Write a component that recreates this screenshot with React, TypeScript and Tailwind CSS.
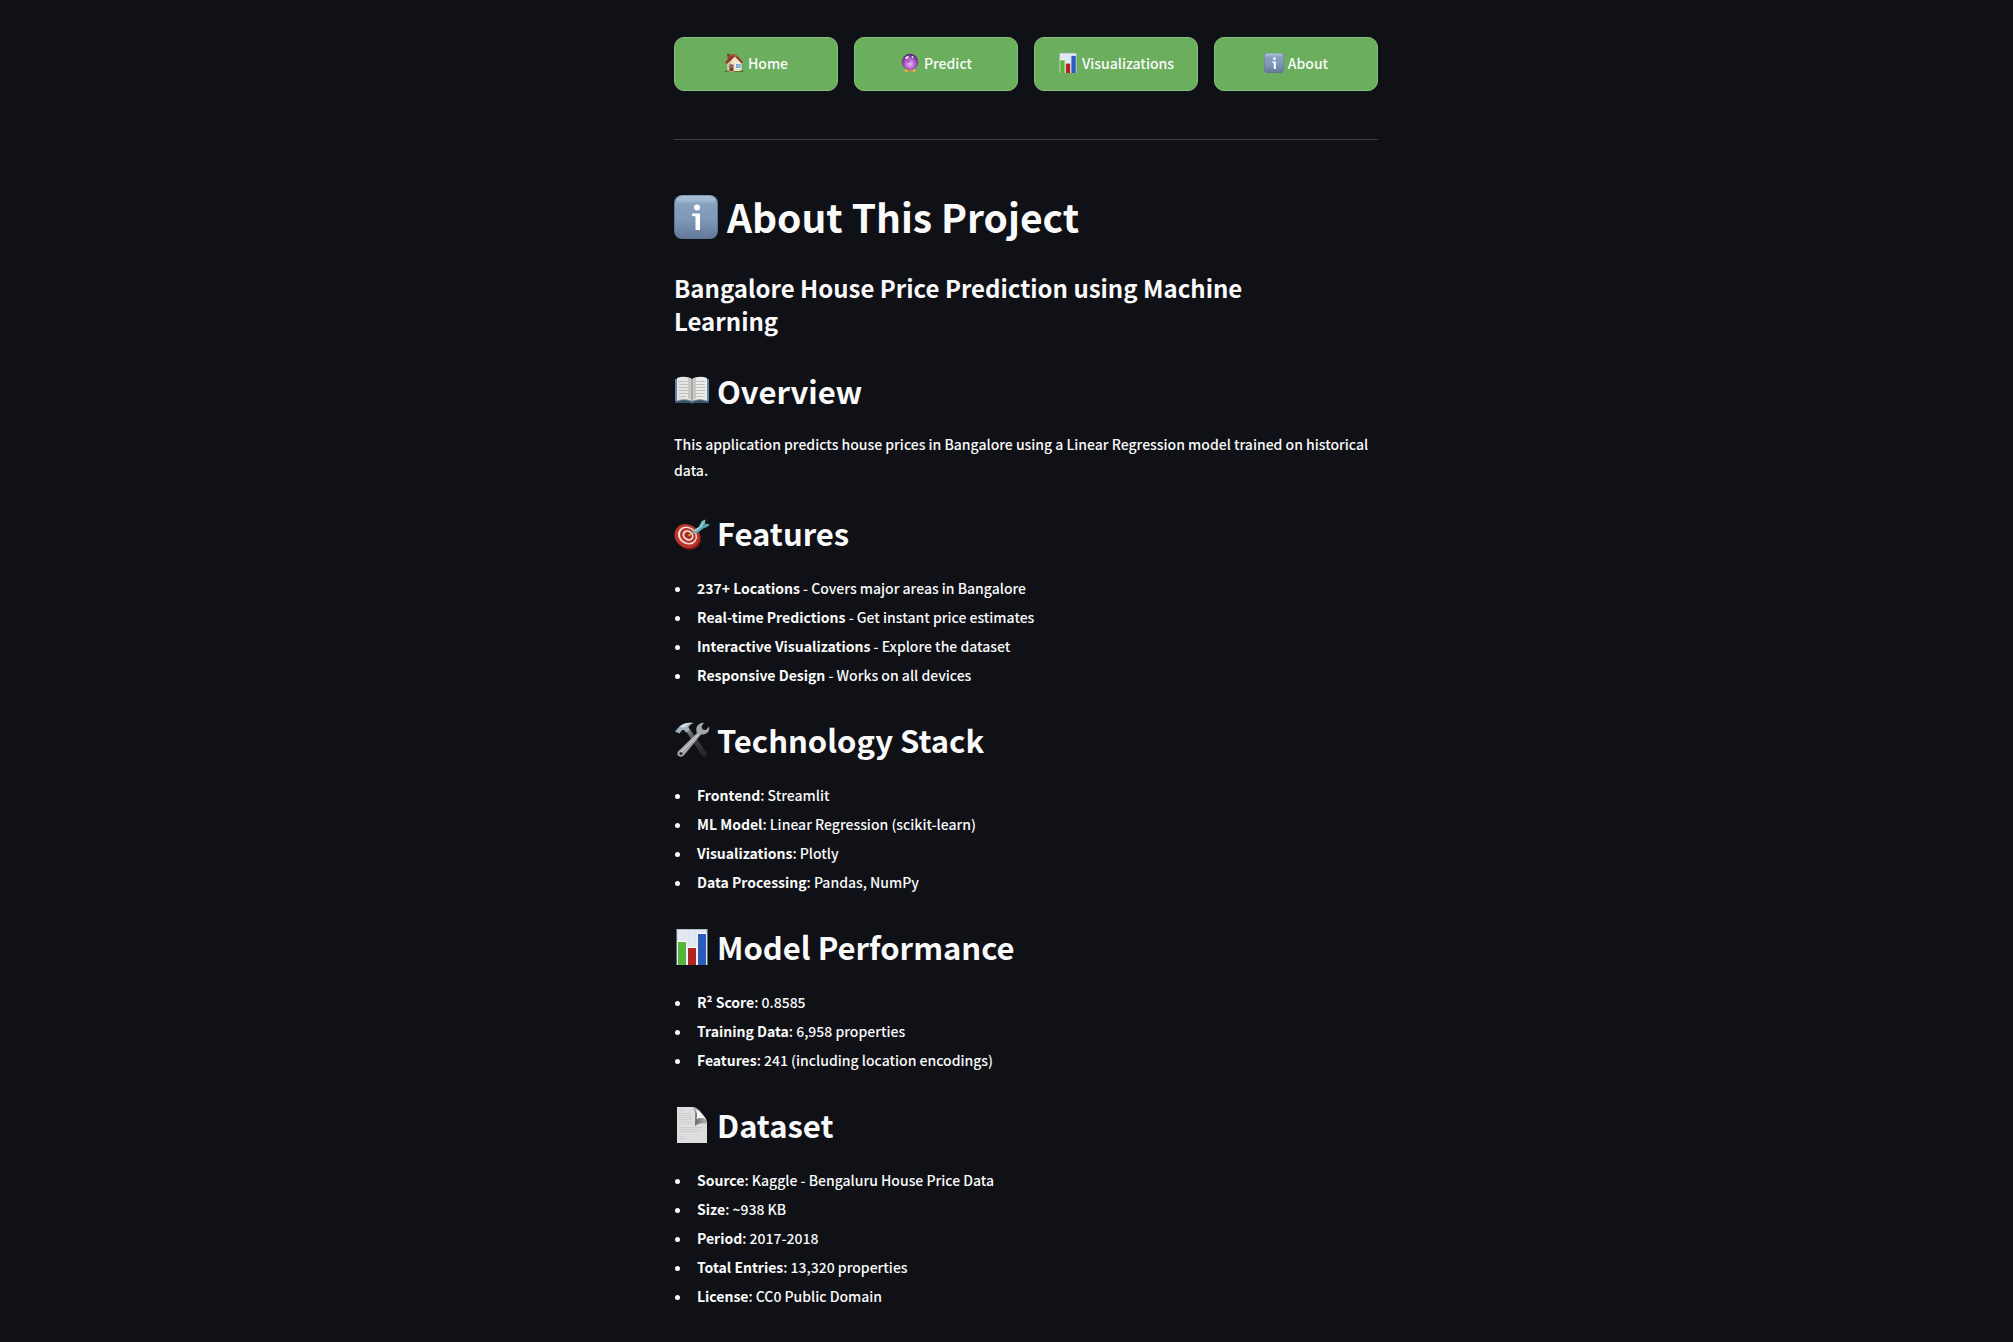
import type { ReactNode } from "react";

function HouseIcon({ className }: { className: string }) {
  return (
    <svg viewBox="0 0 40 40" className={className} aria-hidden="true">
      <rect x="7" y="3" width="5" height="10" fill="#9a4a38" />
      <rect x="6" y="2" width="7" height="3" fill="#7d3427" />
      <path d="M7 18 20 6l15 13v19H7Z" fill="#f3e3c3" />
      <path d="M7 18 15 11v27H7Z" fill="#d9c39c" />
      <path d="M2 19 16 3l8 0L38 18l-3 3L22 7 6 22Z" fill="#8e3a2c" />
      <path d="M16 3h8l5 5-7-1Z" fill="#b9604c" />
      <rect x="11" y="23" width="8" height="14" fill="#7a3c2c" />
      <rect x="13" y="25" width="4" height="4" fill="#6fa3c9" />
      <rect x="23" y="21" width="11" height="10" fill="#fff" />
      <rect x="24" y="22" width="9" height="8" fill="#5f9fd0" />
      <path d="M28.500 22v8M24 26h9" stroke="#d8ecf8" strokeWidth="1" />
      <path d="M1 36q5-3 9 0h20q5-3 9 0v2H1Z" fill="#5c7a35" />
      <rect x="10" y="36" width="10" height="2" fill="#b39a80" />
    </svg>
  );
}

function CrystalBallIcon({ className }: { className: string }) {
  return (
    <svg viewBox="0 0 40 40" className={className} aria-hidden="true">
      <defs>
        <radialGradient id="ball" cx="50%" cy="62%" r="55%">
          <stop offset="0" stopColor="#f0b8f6" />
          <stop offset="0.5" stopColor="#b765cb" />
          <stop offset="1" stopColor="#5f2d83" />
        </radialGradient>
      </defs>
      <path d="M10 32h20l3 4-4 3-4-2H15l-4 2-4-3Z" fill="#c99a3e" />
      <path d="M10 34l4 3M30 34l-4 3" stroke="#f5dc8a" strokeWidth="2" />
      <circle cx="20" cy="18" r="16.500" fill="url(#ball)" />
      <ellipse cx="14" cy="9" rx="4" ry="2.500" fill="#fff" opacity="0.85" transform="rotate(-30 14 9)" />
      <circle cx="25" cy="8" r="1.800" fill="#fff" opacity="0.9" />
      <circle cx="17" cy="17" r="2" fill="#6a2f8f" opacity="0.7" />
    </svg>
  );
}

function ChartIcon({ className }: { className: string }) {
  return (
    <svg viewBox="0 0 36 36" className={className} aria-hidden="true">
      <rect x="2.500" y="0" width="31" height="36" fill="#b4c0cd" />
      <rect x="3.500" y="1" width="29" height="35" fill="#e3e9f3" />
      <path d="M4 7h28M4 13h28M4 19h28M4 25h28M4 31h28M9 1v34M15 1v34M21 1v34M27 1v34" stroke="#d6dfec" strokeWidth="0.500" />
      <rect x="3.500" y="12" width="9" height="24" fill="#fff" />
      <rect x="13.500" y="18" width="9" height="18" fill="#fff" />
      <rect x="23.500" y="4" width="9" height="32" fill="#fff" />
      <rect x="4" y="13" width="8" height="23" fill="#54b53d" />
      <rect x="14" y="19" width="8" height="17" fill="#b1251e" />
      <rect x="24" y="5" width="8" height="31" fill="#2a5cbc" />
    </svg>
  );
}

function InfoIcon({ className }: { className: string }) {
  return (
    <svg viewBox="0 0 44 44" className={className} aria-hidden="true">
      <defs>
        <linearGradient id="tile" x1="0" y1="0" x2="0" y2="1">
          <stop offset="0" stopColor="#a9bfd4" />
          <stop offset="0.100" stopColor="#a3b9d0" />
          <stop offset="0.200" stopColor="#87a0be" />
          <stop offset="0.550" stopColor="#8199b8" />
          <stop offset="1" stopColor="#63799a" />
        </linearGradient>
      </defs>
      <rect width="44" height="44" rx="8" fill="#5d7493" />
      <rect x="1" y="0.500" width="42" height="42.500" rx="7.500" fill="url(#tile)" />
      <circle cx="23" cy="12.500" r="3" fill="#fff" />
      <path d="M18 18.500h8v16.500h-4.500V21.500l-3.500-0.800Z" fill="#fff" />
    </svg>
  );
}

function BookIcon({ className }: { className: string }) {
  return (
    <svg viewBox="0 0 36 36" className={className} aria-hidden="true">
      <path d="M1 6h34v24H20q-2 2-4 0H1Z" fill="#38576e" />
      <path d="M1 6h2v22H1ZM33 6h2v22h-2Z" fill="#5e87a3" />
      <path d="M3 5q8-3 15 1v22q-8-3-15 0Z" fill="#e6e5e3" />
      <path d="M33 5q-8-3-15 1v22q8-3 15 0Z" fill="#ececea" />
      <path d="M14 4.500q3 0 4 2v21q-1-1.500-4-2ZM22 4.500q-3 0-4 2v21q1-1.500 4-2Z" fill="#c9c7c3" />
      <path d="M5 8.500h9M5 11.500h9M5 14.500h9M5 17.500h9M5 20.500h9M5 23.500h7M22 8.500h9M22 11.500h9M22 14.500h9M22 17.500h9M22 20.500h9M22 23.500h7" stroke="#bdbcb9" strokeWidth="0.900" />
      <path d="M3 28q8-3 15 0.500q7-3.500 15-0.500" fill="none" stroke="#9b9a96" strokeWidth="0.800" />
      <path d="M18 6v22" stroke="#8b8985" strokeWidth="1" />
    </svg>
  );
}

function DartIcon({ className }: { className: string }) {
  return (
    <svg viewBox="0 0 36 36" className={className} aria-hidden="true">
      <ellipse cx="14.500" cy="22.500" rx="13" ry="11.500" transform="rotate(35 14.500 22.500)" fill="#7c1d18" />
      <ellipse cx="13" cy="21" rx="13" ry="11.500" transform="rotate(35 13 21)" fill="#bb332b" />
      <ellipse cx="13.500" cy="20.500" rx="10" ry="8.600" transform="rotate(35 13.500 20.500)" fill="#f0e4df" />
      <ellipse cx="13.800" cy="20.500" rx="8.300" ry="7" transform="rotate(35 13.800 20.500)" fill="#bb332b" />
      <ellipse cx="14" cy="20.500" rx="5.800" ry="4.800" transform="rotate(35 14 20.500)" fill="#f0e4df" />
      <ellipse cx="14.200" cy="20.500" rx="4" ry="3.200" transform="rotate(35 14.200 20.500)" fill="#a92a24" />
      <path d="M14.500 20.500 21 17" stroke="#d9b44c" strokeWidth="1.600" />
      <path d="M18.500 19 20.500 15l8-5.500 2 3-6.500 5Z" fill="#5aa9b5" />
      <path d="M20.500 15l8-5.500 0.800 1.200-8.500 6Z" fill="#9adce2" />
      <path d="M25 11.500 28 6l3.500-1.500-1 5Z" fill="#7cc8d0" />
      <path d="M28 12l3.500-3.500 4.500 1-3 2.500-3 1Z" fill="#58a5b1" />
    </svg>
  );
}

function ToolsIcon({ className }: { className: string }) {
  return (
    <svg viewBox="0 0 36 36" className={className} aria-hidden="true">
      <defs>
        <linearGradient id="grip" x1="0" y1="0" x2="1" y2="1">
          <stop offset="0" stopColor="#8b8e93" />
          <stop offset="0.450" stopColor="#3a3b3f" />
          <stop offset="1" stopColor="#202124" />
        </linearGradient>
      </defs>
      <path d="M12 9 16 7.500 33 31q1 3-2 4-2 0-3-1.500Z" fill="url(#grip)" />
      <path d="M1 9.500 5 5q6-5.500 15-4-5 1.500-5.500 4.500l1.500 2-4 3-2-2.500-2 0-2.500 3.500Z" fill="#9fb0bf" />
      <path d="M5 5q6-5 14-4-6 1-8 4.500Z" fill="#d2dde5" />
      <path d="M23 11q-2-5 1-8 2-2.500 6-2.500l-2.500 4 1 3 3.500 0.500 3-3.500q1 4-2 6.500-2.500 2-6 1.500L11 32q-2 3.500-5.500 2.500T4 29.500Z" fill="#a4a5a8" />
      <path d="M24.500 12.500 7 30" stroke="#dedfe1" strokeWidth="1" />
      <circle cx="7" cy="31.500" r="1.500" fill="#2b2c2f" />
    </svg>
  );
}

function PageIcon({ className }: { className: string }) {
  return (
    <svg viewBox="0 0 36 36" className={className} aria-hidden="true">
      <defs>
        <linearGradient id="fold" x1="0" y1="0.400" x2="1" y2="0.600">
          <stop offset="0" stopColor="#dedede" />
          <stop offset="0.350" stopColor="#6f6f6f" />
          <stop offset="1" stopColor="#b5b5b5" />
        </linearGradient>
      </defs>
      <path d="M3 0h15q4 0 7 3l5 6q3 3 3 7v20H3Z" fill="#dedede" />
      <path d="M5 3.500h6M5 6.500h12M5 8.500h12M5 10.500h13M5 12.500h13M5 14.500h14M5 16.500h14M5 20.500h24M5 22.500h24M5 24.500h22M5 29.500h6M5 31.500h8" stroke="#c9c9c9" strokeWidth="0.700" />
      <path d="M17 0q4 2 4 7v12q4-4 12-2-1-5-4-8L24 3Q21 0 17 0Z" fill="url(#fold)" />
      <path d="M21 2q3 4 1.500 10 4-1.500 9-0.500L25 4Z" fill="#f4f4f4" />
    </svg>
  );
}

type Icon = (props: { className: string }) => ReactNode;

const navItems: { label: string; icon: Icon }[] = [
  { label: "Home", icon: HouseIcon },
  { label: "Predict", icon: CrystalBallIcon },
  { label: "Visualizations", icon: ChartIcon },
  { label: "About", icon: InfoIcon },
];

const sections: { title: string; icon: Icon; items: [string, string][] }[] = [
  {
    title: "Features",
    icon: DartIcon,
    items: [
      ["237+ Locations", " - Covers major areas in Bangalore"],
      ["Real-time Predictions", " - Get instant price estimates"],
      ["Interactive Visualizations", " - Explore the dataset"],
      ["Responsive Design", " - Works on all devices"],
    ],
  },
  {
    title: "Technology Stack",
    icon: ToolsIcon,
    items: [
      ["Frontend", ": Streamlit"],
      ["ML Model", ": Linear Regression (scikit-learn)"],
      ["Visualizations", ": Plotly"],
      ["Data Processing", ": Pandas, NumPy"],
    ],
  },
  {
    title: "Model Performance",
    icon: ChartIcon,
    items: [
      ["R² Score", ": 0.8585"],
      ["Training Data", ": 6,958 properties"],
      ["Features", ": 241 (including location encodings)"],
    ],
  },
  {
    title: "Dataset",
    icon: PageIcon,
    items: [
      ["Source", ": Kaggle - Bengaluru House Price Data"],
      ["Size", ": ~938 KB"],
      ["Period", ": 2017-2018"],
      ["Total Entries", ": 13,320 properties"],
      ["License", ": CC0 Public Domain"],
    ],
  },
];

function SectionHeading({ icon: IconView, children }: { icon: Icon; children: ReactNode }) {
  return (
    <h2 className="flex items-center gap-[7px] text-[31px] leading-[44px] font-bold">
      <IconView className="size-9 shrink-0" />
      {children}
    </h2>
  );
}

export default function App() {
  return (
    <div className="min-h-screen bg-[#0f1116] pt-[37px] pr-4 pb-6 pl-[55px] font-['Noto_Sans_CJK_SC','Noto_Sans',sans-serif] text-[14px] font-medium text-[#fafafa]">
      <div className="mx-auto max-w-[704px]">
        <nav className="grid grid-cols-4 gap-4">
          {navItems.map(({ label, icon: IconView }) => (
            <button
              key={label}
              type="button"
              className="flex h-[54px] items-center justify-center gap-1 rounded-[10px] border border-[#88be7e] bg-[#6aae5e] pb-0.5 font-medium"
            >
              <IconView className="size-5 shrink-0" />
              {label}
            </button>
          ))}
        </nav>
        <hr className="mt-12 border-[#3e4045]" />
        <h1 className="mt-[50px] flex items-center gap-[9px] text-[39px] leading-[53px] font-bold">
          <InfoIcon className="size-11 shrink-0" />
          About This Project
        </h1>
        <h3 className="mt-7 pr-8 text-[24px] leading-[33px] font-bold">
          Bangalore House Price Prediction using Machine Learning
        </h3>
        <section className="mt-8">
          <SectionHeading icon={BookIcon}>Overview</SectionHeading>
          <p className="mt-[18px] leading-[26px]">
            This application predicts house prices in Bangalore using a Linear Regression model trained on historical
            data.
          </p>
        </section>
        {sections.map(({ title, icon, items }) => (
          <section key={title} className="mt-7">
            <SectionHeading icon={icon}>{title}</SectionHeading>
            <ul className="mt-[19px] list-disc pl-[18px] leading-[29px]">
              {items.map(([term, detail]) => (
                <li key={term} className="pl-[5px]">
                  <strong className="font-bold">{term}</strong>
                  {detail}
                </li>
              ))}
            </ul>
          </section>
        ))}
      </div>
    </div>
  );
}
